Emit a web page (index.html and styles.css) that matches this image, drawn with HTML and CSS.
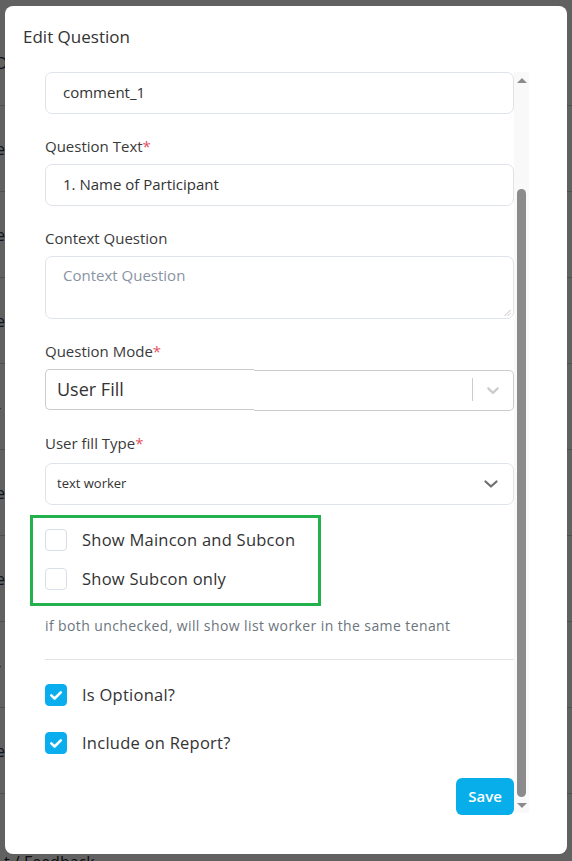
FILE: index.html
```html
<!DOCTYPE html>
<html>
<head>
<meta charset="utf-8">
<title>Edit Question</title>
<link rel="stylesheet" href="styles.css">
</head>
<body>
<div class="page">
  <div class="bg-row"><span class="bg-text">Do</span></div>
  <div class="bg-row"><span class="bg-text">el</span></div>
  <div class="bg-row"><span class="bg-text">e</span></div>
  <div class="bg-row"><span class="bg-text">el</span></div>
  <div class="bg-row"><span class="bg-text">-</span></div>
  <div class="bg-row"><span class="bg-text">e</span></div>
  <div class="bg-row"><span class="bg-text">el</span></div>
  <div class="bg-row"><span class="bg-text">-</span></div>
  <div class="bg-row"><span class="bg-text">e</span></div>
  <div class="bg-foot">t / Feedback</div>
</div>
<div class="overlay"></div>
<div class="modal">
  <div class="modal-header">
    <h5 class="modal-title">Edit Question</h5>
  </div>
  <div class="modal-body">
    <div class="scroll-content">
      <div class="group">
        <div class="form-control">comment_1</div>
      </div>
      <div class="group">
        <div class="field-label">Question Text<span class="req">*</span></div>
        <div class="form-control">1. Name of Participant</div>
      </div>
      <div class="group">
        <div class="field-label">Context Question</div>
        <div class="form-control textarea">
          <span class="placeholder">Context Question</span>
          <svg class="grip" width="7" height="7" viewBox="0 0 7 7"><path d="M1 6.5 L6.5 1 M4 6.5 L6.5 4" stroke="#777" stroke-width="0.8" stroke-dasharray="1 0.6"/></svg>
        </div>
      </div>
      <div class="group">
        <div class="field-label">Question Mode<span class="req">*</span></div>
        <div class="rs-select">
          <div class="rs-left"><span class="rs-value">User Fill</span></div>
          <div class="rs-right">
            <span class="rs-sep"></span>
            <span class="rs-ind">
              <svg width="20" height="20" viewBox="0 0 20 20"><path fill="#cccccc" d="M4.516 7.548c0.436-0.446 1.043-0.481 1.576 0l3.908 3.747 3.908-3.747c0.533-0.481 1.141-0.446 1.574 0 0.436 0.445 0.408 1.197 0 1.615-0.406 0.418-4.695 4.502-4.695 4.502-0.217 0.223-0.502 0.335-0.787 0.335s-0.57-0.112-0.789-0.335c0 0-4.287-4.084-4.695-4.502s-0.436-1.17 0-1.615z"/></svg>
            </span>
          </div>
        </div>
      </div>
      <div class="group last">
        <div class="field-label sel2">User fill Type<span class="req">*</span></div>
        <div class="form-control select">
          <span class="small-value">text worker</span>
          <svg class="chev" width="14" height="10" viewBox="0 0 14 10"><path d="M1.5 2.5 L7 7.5 L12.5 2.5" fill="none" stroke="#6f6f6f" stroke-width="2.2" stroke-linecap="round" stroke-linejoin="round"/></svg>
        </div>
      </div>
      <div class="highlight">
        <div class="check-row">
          <span class="checkbox"></span>
          <span class="check-text">Show Maincon and Subcon</span>
        </div>
        <div class="check-row">
          <span class="checkbox"></span>
          <span class="check-text">Show Subcon only</span>
        </div>
      </div>
      <div class="helper">if both unchecked, will show list worker in the same tenant</div>
      <div class="divider"></div>
      <div class="checks">
        <div class="check-row">
          <span class="checkbox checked"><svg width="22" height="22" viewBox="0 0 22 22"><path d="M6.3 11.4 L9.6 14.5 L15.8 8.3" fill="none" stroke="#fff" stroke-width="2.6" stroke-linecap="round" stroke-linejoin="round"/></svg></span>
          <span class="check-text">Is Optional?</span>
        </div>
        <div class="check-row">
          <span class="checkbox checked"><svg width="22" height="22" viewBox="0 0 22 22"><path d="M6.3 11.4 L9.6 14.5 L15.8 8.3" fill="none" stroke="#fff" stroke-width="2.6" stroke-linecap="round" stroke-linejoin="round"/></svg></span>
          <span class="check-text">Include on Report?</span>
        </div>
      </div>
      <div class="actions">
        <button class="btn-save">Save</button>
      </div>
    </div>
    <div class="scrollbar">
      <div class="sb-btn"><span class="tri-up"></span></div>
      <div class="sb-track"><div class="sb-thumb"></div></div>
      <div class="sb-btn"><span class="tri-down"></span></div>
    </div>
  </div>
</div>
</body>
</html>
```
FILE: styles.css
```css
* { box-sizing: border-box; }
html, body { margin: 0; padding: 0; }
body {
  width: 572px;
  height: 861px;
  overflow: hidden;
  background: #ffffff;
  font-family: "Open Sans", "Noto Sans", sans-serif;
  color: #333;
  position: relative;
}
.page {
  padding-top: 20px;
}
.bg-row {
  height: 86px;
  border-bottom: 1px solid #cfcfcf;
  display: flex;
  align-items: center;
}
.bg-text {
  font-size: 16px;
  color: #1f3550;
  margin-left: -4px;
}
.bg-foot {
  position: absolute;
  left: 4px;
  top: 851px;
  font-size: 16px;
  color: #222;
}
.overlay {
  position: absolute;
  inset: 0;
  background: rgba(0, 0, 0, 0.62);
}
.modal {
  position: absolute;
  left: 5px;
  top: 6px;
  width: 562px;
  height: 848px;
  background: #fff;
  border-radius: 8px;
  display: flex;
  flex-direction: column;
}
.modal-header {
  height: 66px;
  padding: 19px 0 0 18px;
}
.modal-title {
  margin: 0;
  font-size: 17px;
  line-height: 24px;
  font-weight: 400;
  color: #333;
}
.modal-body {
  display: flex;
  padding-left: 40px;
  height: 744px;
}
.scroll-content {
  width: 469px;
}
.group {
  margin-bottom: 22px;
}
.group.last {
  margin-bottom: 0;
}
.field-label {
  font-size: 15px;
  line-height: 20px;
  color: #3a3a3a;
  margin-bottom: 8px;
}
.field-label.sel2 {
  margin-bottom: 10px;
}
.req {
  color: #e5505e;
}
.form-control {
  height: 42px;
  border: 1px solid #dfe3ea;
  border-radius: 7px;
  padding: 0 17px 2px;
  font-size: 15px;
  color: #333;
  display: flex;
  align-items: center;
}
.form-control.textarea {
  height: 63px;
  align-items: flex-start;
  padding-top: 7px;
  position: relative;
}
.placeholder {
  color: #8a93a3;
  line-height: 22px;
}
.grip {
  position: absolute;
  right: 2px;
  bottom: 2px;
}
.rs-select {
  display: flex;
  height: 42px;
  margin-top: 7px;
}
.rs-left {
  width: 209px;
  height: 41px;
  border: 1px solid #cccccc;
  border-right: none;
  border-radius: 5px 0 0 5px;
  display: flex;
  align-items: center;
  padding: 0 0 2px 11px;
}
.rs-value {
  font-size: 18px;
  color: #333;
}
.rs-right {
  flex: 1;
  height: 41px;
  margin-top: 1px;
  border: 1px solid #cccccc;
  border-left: none;
  border-radius: 0 5px 5px 0;
  display: flex;
  align-items: center;
  justify-content: flex-end;
}
.rs-sep {
  width: 1px;
  height: 23px;
  background: #cccccc;
  margin-top: -2px;
}
.rs-ind {
  width: 40px;
  display: flex;
  justify-content: center;
  align-items: center;
  margin-top: -1px;
}
.form-control.select {
  justify-content: space-between;
  padding: 0 15px 0 11px;
}
.small-value {
  font-size: 13px;
  color: #333;
  margin-top: -2px;
}
.highlight {
  margin: 10px 0 0 -15px;
  width: 291px;
  border: 3px solid #22b14c;
  padding: 11px 0 13px 12px;
  display: flex;
  flex-direction: column;
  gap: 17px;
}
.check-row {
  display: flex;
  align-items: center;
  height: 22px;
  gap: 15px;
}
.checkbox {
  width: 22px;
  height: 22px;
  border: 1px solid #d9dfe8;
  border-radius: 4px;
  background: #fff;
  flex: none;
  display: block;
}
.checkbox.checked {
  background: #0aaeef;
  border-color: #0aaeef;
}
.checkbox.checked svg {
  display: block;
  margin: -1px;
}
.check-text {
  font-size: 16.5px;
  letter-spacing: 0.25px;
  color: #333;
  line-height: 22px;
  padding-bottom: 1px;
}
.helper {
  margin-top: 10px;
  font-size: 14px;
  letter-spacing: 0.4px;
  line-height: 20px;
  color: #6c757d;
}
.divider {
  margin-top: 23px;
  height: 1px;
  background: #e3e3e3;
}
.checks {
  margin-top: 24px;
  display: flex;
  flex-direction: column;
  gap: 26px;
}
.actions {
  margin-top: 24px;
  display: flex;
  justify-content: flex-end;
}
.btn-save {
  width: 58px;
  height: 37px;
  border: none;
  border-radius: 6px;
  background: #07aeea;
  color: #fff;
  font-family: "Open Sans", "Noto Sans", sans-serif;
  font-size: 15px;
  font-weight: 600;
  padding: 0 0 2px;
}
.scrollbar {
  width: 15px;
  height: 741px;
  background: #f9f9f9;
  display: flex;
  flex-direction: column;
}
.sb-btn {
  height: 16px;
  display: flex;
  justify-content: center;
  align-items: center;
}
.tri-up {
  width: 0;
  height: 0;
  border-left: 5px solid transparent;
  border-right: 5px solid transparent;
  border-bottom: 5px solid #8b8b8b;
}
.tri-down {
  width: 0;
  height: 0;
  border-left: 5px solid transparent;
  border-right: 5px solid transparent;
  border-top: 5px solid #8b8b8b;
}
.sb-track {
  flex: 1;
  padding: 101px 3px 0 3px;
  display: flex;
}
.sb-thumb {
  flex: 1;
  background: #8b8b8b;
  border-radius: 5px;
}
```
